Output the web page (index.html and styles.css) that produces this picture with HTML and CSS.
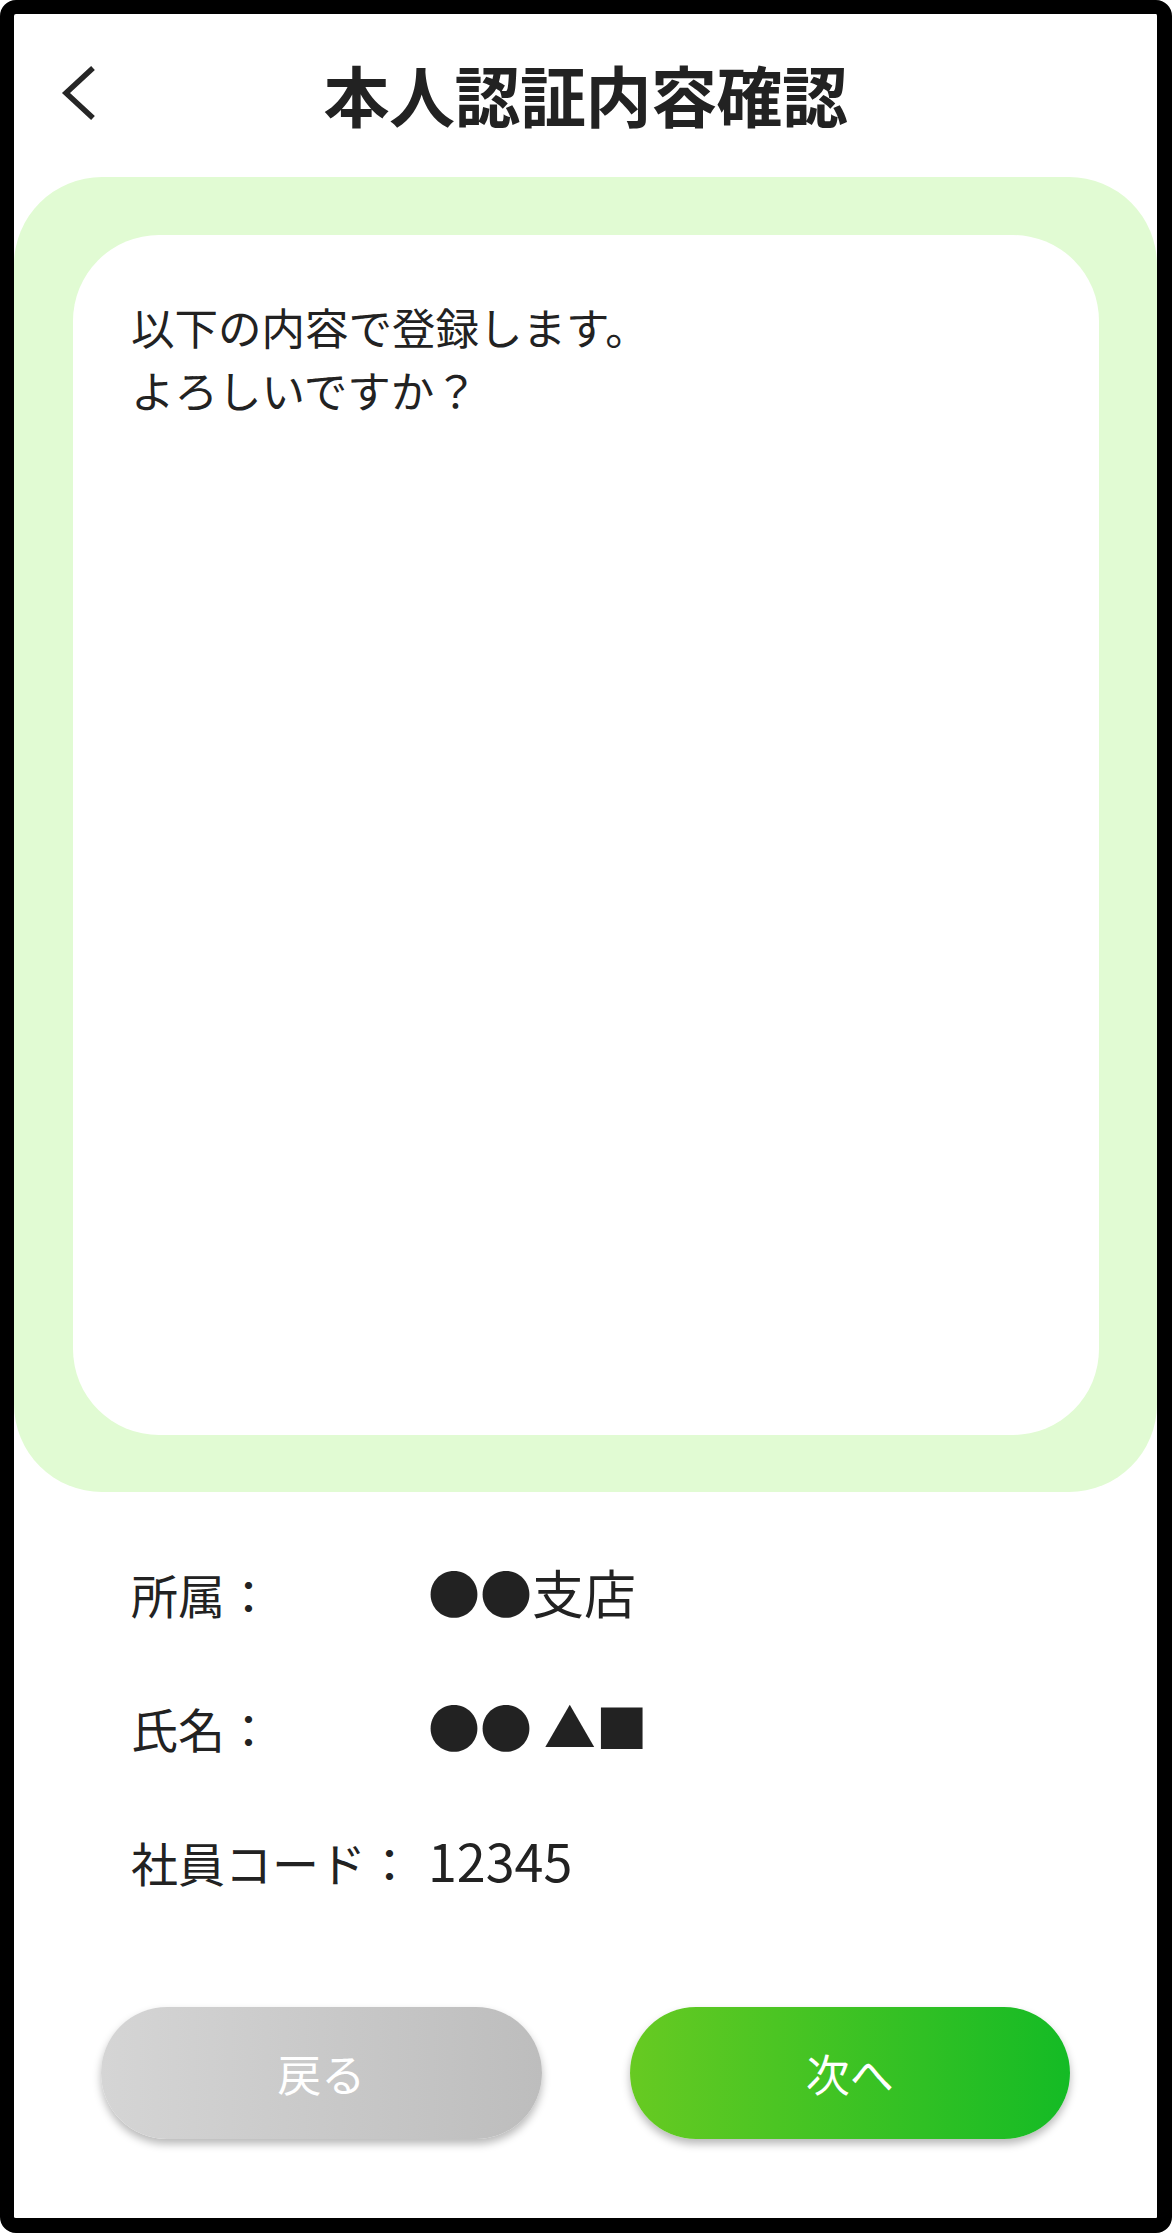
FILE: index.html
```html
<!DOCTYPE html>
<html lang="ja">
<head>
<meta charset="utf-8">
<title>本人認証内容確認</title>
<link rel="stylesheet" href="styles.css">
</head>
<body>
<div class="frame">
  <header class="header">
    <div class="back">
      <svg class="back-icon" width="50" height="70" viewBox="0 0 50 70" aria-hidden="true">
        <polyline points="41,10 14,35 41,60" fill="none" stroke="#262626" stroke-width="5.5" stroke-linecap="butt" stroke-linejoin="miter"/>
      </svg>
    </div>
    <h1 class="title">本人認証内容確認</h1>
    <div class="spacer"></div>
  </header>

  <section class="panel">
    <div class="card">
      <p class="message">以下の内容で登録します。<br>よろしいですか？</p>
    </div>
  </section>

  <section class="info">
    <div class="row">
      <span class="label">所属：</span>
      <span class="value">●●支店</span>
    </div>
    <div class="row">
      <span class="label">氏名：</span>
      <span class="value">●● ▲■</span>
    </div>
    <div class="row">
      <span class="label">社員コード：</span>
      <span class="value">12345</span>
    </div>
  </section>

  <div class="actions">
    <button class="btn btn-back" type="button">戻る</button>
    <button class="btn btn-next" type="button">次へ</button>
  </div>
</div>
</body>
</html>
```

FILE: styles.css
```css
* {
  box-sizing: border-box;
}

html, body {
  margin: 0;
  padding: 0;
  background: #ffffff;
}

body {
  font-family: "Noto Sans CJK JP", "Noto Sans", sans-serif;
  color: #222222;
}

.frame {
  width: 1172px;
  height: 2233px;
  border: 14px solid #000000;
  border-bottom-width: 15px;
  border-right-width: 15px;
  border-radius: 16px;
  background: #ffffff;
  display: flex;
  flex-direction: column;
  overflow: hidden;
}

.header {
  height: 163px;
  flex: none;
  display: grid;
  grid-template-columns: 1fr auto 1fr;
  align-items: center;
  padding-bottom: 6px;
}

.back {
  padding-left: 38px;
  display: flex;
  align-items: center;
}

.back-icon {
  display: block;
}

.title {
  margin: 0;
  font-size: 66px;
  font-weight: 700;
  line-height: 1;
  color: #222222;
  letter-spacing: -0.5px;
}

.panel {
  flex: none;
  height: 1315px;
  background: #e1fbd3;
  border-radius: 88px;
  padding: 58px 58px 57px 59px;
}

.card {
  height: 100%;
  background: #ffffff;
  border-radius: 86px;
  padding: 60px 58px;
}

.message {
  margin: 0;
  font-size: 43.5px;
  line-height: 63px;
  color: #222222;
}

.info {
  flex: none;
  padding: 62px 0 0 117px;
}

.row {
  height: 134px;
  display: flex;
  align-items: baseline;
}

.label {
  width: 297px;
  flex: none;
  font-size: 47px;
  color: #222222;
}

.value {
  font-size: 52px;
  color: #222222;
}

.actions {
  flex: none;
  margin-top: 51px;
  display: flex;
  gap: 88px;
  padding: 0 87px 0 87px;
}

.btn {
  width: 441px;
  height: 132px;
  border: none;
  border-radius: 66px;
  font-family: "Noto Sans CJK JP", "Noto Sans", sans-serif;
  font-size: 44px;
  color: #ffffff;
  box-shadow: 0 5px 9px rgba(0, 0, 0, 0.28);
  padding: 0;
}

.btn-back {
  background: linear-gradient(to right, #d5d5d5, #bdbdbd);
}

.btn-next {
  background: linear-gradient(to right, #67ca22, #14bb25);
}
```
